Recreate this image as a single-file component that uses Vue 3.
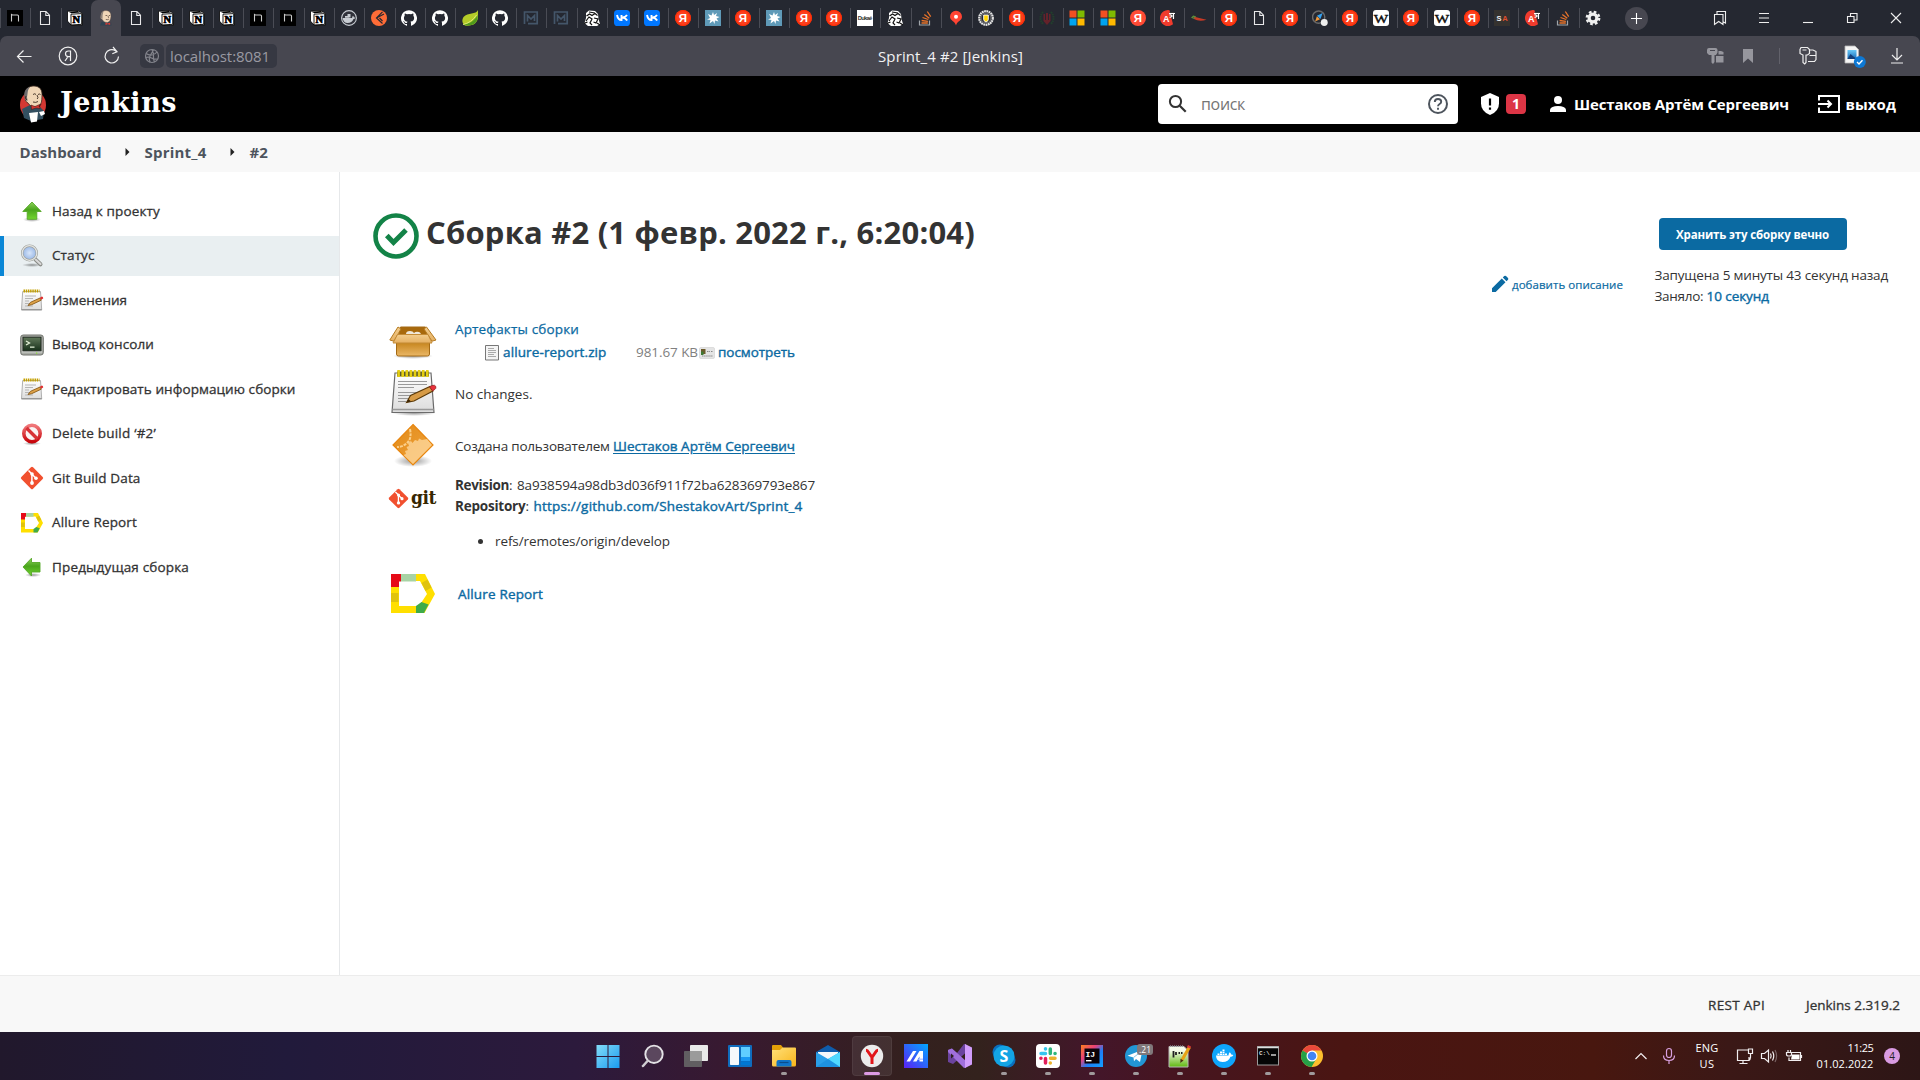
<script setup>
// Stretches a single line of text to a given advance width through letter-spacing.
const vFit = {
  mounted(el, { value }) {
    const range = document.createRange()
    range.selectNodeContents(el)
    const natural = range.getBoundingClientRect().width
    el.style.letterSpacing = (value - natural) / el.textContent.length + 'px'
  },
}

const tabs = [
  'nbox', 'doc', 'notion', 'face', 'doc', 'notion', 'notion', 'notion', 'nbox', 'nbox', 'notion',
  'dockerc', 'postman', 'github', 'github', 'leaf', 'github', 'mbox', 'mbox', 'sketch', 'vk', 'vk',
  'ya', 'splat', 'ya', 'splat', 'ya', 'ya', 'duka', 'sketch', 'stack', 'pin', 'beer', 'ya', 'crest',
  'ms', 'ms', 'ya2', 'trans', 'chili', 'ya', 'doc', 'ya', 'compass', 'ya', 'wiki', 'ya', 'wiki', 'ya',
  'sa', 'trans', 'stack', 'gear',
]

// Letters set on top of the icon shapes.
const sans = 'Liberation Sans, sans-serif'
const serif = 'Liberation Serif, serif'
const yaLetter = [{ t: 'Я', x: 8, y: 12.1, 'font-size': 11.5, 'font-weight': 700, 'font-family': sans, fill: '#fff' }]
const letters = {
  notion: [{ t: 'N', x: 9.4, y: 13, 'font-size': 10.5, 'font-weight': 700, 'font-family': serif, fill: '#000', stroke: '#000', 'stroke-width': 0.7 }],
  ya: yaLetter,
  ya2: yaLetter,
  duka: [{ t: 'Dukaé', x: 8, y: 10, 'font-size': 5.8, 'font-weight': 700, textLength: 14.5, 'font-family': sans, fill: '#333' }],
  trans: [{ t: 'A', x: 6.2, y: 11.5, 'font-size': 9, 'font-weight': 700, 'font-family': sans, fill: '#fff' }],
  wiki: [{ t: 'W', x: 8, y: 12.6, 'font-size': 13, textLength: 14.5, lengthAdjust: 'spacingAndGlyphs', 'font-family': serif, fill: '#111', stroke: '#111', 'stroke-width': 0.4 }],
  sa: [
    { t: 'S', x: 4.9, y: 10.7, 'font-size': 7.5, 'font-weight': 700, 'font-family': sans, fill: '#eee' },
    { t: 'A', x: 11, y: 10.7, 'font-size': 7.5, 'font-weight': 700, 'font-family': sans, fill: '#e2502c' },
  ],
  skype: [{ t: 'S', x: 12, y: 17.8, 'font-size': 16, 'font-weight': 700, 'font-family': 'Open Sans, sans-serif', fill: '#fff' }],
  idea: [{ t: 'IJ', x: 10.2, y: 12.5, 'font-size': 8, 'font-weight': 700, 'font-family': 'Liberation Mono, monospace', fill: '#fff' }],
  cmd: [{ t: 'C:\\', x: 8.4, y: 11, 'font-size': 6, 'font-weight': 700, 'font-family': 'Liberation Mono, monospace', fill: '#ddd' }],
}
const attrs = ({ t, ...rest }) => rest

const tasks = [
  { icon: 'up', text: 'Назад к проекту', w: 108 },
  { icon: 'lens', text: 'Статус', w: 42.5, active: true },
  { icon: 'note', text: 'Изменения', w: 75 },
  { icon: 'term', text: 'Вывод консоли', w: 102 },
  { icon: 'note', text: 'Редактировать информацию сборки', w: 243.5 },
  { icon: 'stop', text: 'Delete build ‘#2’', w: 104 },
  { icon: 'git', text: 'Git Build Data', w: 88.5 },
  { icon: 'allure', text: 'Allure Report', w: 85 },
  { icon: 'prev', text: 'Предыдущая сборка', w: 137 },
]

const apps = [
  { icon: 'win' }, { icon: 'find' }, { icon: 'views' }, { icon: 'widgets' }, { icon: 'files', run: true },
  { icon: 'mail' }, { icon: 'yab', active: true }, { icon: 'myasus' }, { icon: 'vs' },
  { icon: 'skype', run: true }, { icon: 'slack', run: true }, { icon: 'idea', run: true },
  { icon: 'tg', run: true, badge: '.21' }, { icon: 'npp', run: true }, { icon: 'docker', run: true },
  { icon: 'cmd', run: true }, { icon: 'chrome', run: true },
]
</script>

<template>
  <div class="screen">
    <svg class="defs" width="0" height="0" aria-hidden="true">
      <defs>
        <linearGradient id="gGreen" x1="0" y1="0" x2="0" y2="1"><stop offset="0" stop-color="#8ed25c" /><stop offset=".45" stop-color="#4aa51c" /><stop offset="1" stop-color="#72d62f" /></linearGradient>
        <linearGradient id="gPaper" x1="0" y1="0" x2="0" y2="1"><stop offset="0" stop-color="#fff" /><stop offset="1" stop-color="#dcdcdc" /></linearGradient>
        <linearGradient id="gRed" x1="0" y1="0" x2="0" y2="1"><stop offset="0" stop-color="#f0787a" /><stop offset="1" stop-color="#c8060c" /></linearGradient>
        <linearGradient id="gBox" x1="0" y1="0" x2="0" y2="1"><stop offset="0" stop-color="#c17d11" /><stop offset="1" stop-color="#eab767" /></linearGradient>
        <linearGradient id="gFlap" x1="0" y1="0" x2="0" y2="1"><stop offset="0" stop-color="#f3cd8e" /><stop offset="1" stop-color="#e5b062" /></linearGradient>
        <linearGradient id="gDia" x1="0" y1="0" x2="1" y2="1"><stop offset="0" stop-color="#e08a18" /><stop offset="1" stop-color="#f3a53e" /></linearGradient>
        <linearGradient id="gWin" x1="0" y1="0" x2="1" y2="1"><stop offset="0" stop-color="#83dcf8" /><stop offset="1" stop-color="#1a9bf0" /></linearGradient>
        <linearGradient id="gFold" x1="0" y1="0" x2="1" y2="1"><stop offset="0" stop-color="#ffe07a" /><stop offset="1" stop-color="#f8b51b" /></linearGradient>
        <linearGradient id="gMy" x1="1" y1="0" x2="0" y2="1"><stop offset="0" stop-color="#00a8ff" /><stop offset="1" stop-color="#5b21f5" /></linearGradient>
        <linearGradient id="gIdea" x1="0" y1="0" x2="1" y2="1"><stop offset="0" stop-color="#fc801d" /><stop offset=".35" stop-color="#e8407a" /><stop offset=".6" stop-color="#1f7df5" /><stop offset="1" stop-color="#11a0ff" /></linearGradient>
        <linearGradient id="gNpp" x1="0" y1="0" x2="0" y2="1"><stop offset=".2" stop-color="#f5fbe8" /><stop offset="1" stop-color="#5fb810" /></linearGradient>
        <linearGradient id="gTerm" x1="0" y1="0" x2="0" y2="1"><stop offset="0" stop-color="#61795a" /><stop offset="1" stop-color="#17301a" /></linearGradient>
        <linearGradient id="gSea" x1="0" y1="0" x2="0" y2="1"><stop offset="0" stop-color="#69c9f8" /><stop offset="1" stop-color="#1569b8" /></linearGradient>
        <radialGradient id="gShade"><stop offset="0" stop-color="#000" stop-opacity=".4" /><stop offset="1" stop-color="#000" stop-opacity="0" /></radialGradient>
        <radialGradient id="gLens"><stop offset="0" stop-color="#d8e6fa" /><stop offset="1" stop-color="#94b4e4" /></radialGradient>
      </defs>

      <!-- tab favicons, 16 x 16 -->
      <symbol id="nbox" viewBox="0 0 16 16"><path fill="#000" d="M0 0h16v16H0z" /><path fill="none" stroke="#c8c8c8" stroke-width="1.1" d="M4.500 11.500v-7l1 .5h5q1 0 1 1v5.500" /></symbol>
      <symbol id="doc" viewBox="0 0 16 16"><path fill="none" stroke="#e8e8ea" stroke-width="1.100" d="M3.500 1.500h5.500l3.500 3.700v9.300h-9zM8.800 1.500v4h3.700" /></symbol>
      <symbol id="notion" viewBox="0 0 16 16"><path fill="#fff" stroke="#000" stroke-width=".8" d="M.5 1.200 11 .5l4.500 3v11.500l-11 .6-4-4.500z" /><path fill="#000" d="M1.500 1.800 10.800 1l2.300 1.600-8.600.6z" /><path fill="#fff" stroke="#000" stroke-width=".9" d="M4 4.200l10.700-.6v10.700L4 15z" /></symbol>
      <symbol id="face" viewBox="0 0 16 16"><path fill="#2f4453" d="M2 15.500l1.500-3.500L8 11l5 1.500.5 3z" /><path fill="#f0d6b7" stroke="#5a4a40" stroke-width=".4" d="M3 5Q3.500.6 8 .5q5 .2 5 5.500-.3 5.500-3.500 6.500Q6 13 4.300 9.500L2.500 8z" /><path fill="#8b8078" d="M3 8Q1.800 3 5.500 1.200 4.300 4.500 4.500 9z" /><path fill="none" stroke="#4a3a30" stroke-width=".7" d="M7.500 5.500h1.800M10.800 5.500h1.400M10 6q1 1.800 0 2M7.800 9.500q1.800.5 3-.3" /><path fill="#d33833" d="M7.500 12.500l2.200 1 2.500-1v2.500l-2.500-.8-2.200.8z" /></symbol>
      <symbol id="butler" viewBox="0 0 28 38"><ellipse cx="14" cy="20" rx="13" ry="14" fill="#d33833" /><path fill="#335061" d="M3 24l8-4 10 2 4 4-1 8-12 2-7-3z" /><path fill="#f0d6b7" stroke="#3a2a20" stroke-width=".8" d="M6.500 12C5 4 10 .8 15 1c6 .2 8.500 4 8 10-.3 5 0 9-5 10.500-4 1-7-.5-9-3.500l-2.500-2z" /><path fill="#6d6b6d" d="M6 15C4 8 6 3 11 2 8 5 9 9 8 12l.5 4z" /><path fill="none" stroke="#3a2a20" stroke-width=".9" d="M14 9.500q2-1.500 3 0M19 9.500q1.500-1 2.500 0M18 10q1.800 3 .2 4M14 17q3 1 5-.5M7 11q-2 2 1 4" /><path fill="#d33833" stroke="#3a1010" stroke-width=".5" d="M12 20l4 1.500 4.500-2 .5 4-4-.5-4.500 1.500zM22 19l-2 3z" /><path fill="#fff" d="M10 28l9-1-1 9.500-6 1zM20 27l5-1 1 3-4 2z" /></symbol>
      <symbol id="dockerc" viewBox="0 0 16 16"><circle cx="8" cy="8" r="7.400" fill="#30323b" stroke="#c8cdd3" stroke-width="1.100" /><path fill="#c8cdd3" d="M1.500 8h9.500q.2-1.500 1-2.300.8.500.9 1.600 1 0 1.600.5-1 1.200-2 1.200-1.500 4-6 4-4 0-5-5zM4 6h4v1.700H4zM6.500 4h3v3.600h-3z" /></symbol>
      <symbol id="postman" viewBox="0 0 16 16"><circle cx="8" cy="8" r="8" fill="#ff6c37" /><path fill="none" stroke="#252831" stroke-width="1.200" d="M11.500 1.800 5.500 8l6 5.500M5.500 8l7.500-4M8.500 8l3 3" /></symbol>
      <symbol id="github" viewBox="0 0 16 16"><path fill="#fff" d="M8 .2a8 8 0 0 0-2.530 15.590c.4.070.55-.17.550-.38v-1.490c-2.230.48-2.700-.95-2.700-.95-.36-.92-.89-1.170-.89-1.170-.73-.5.050-.49.050-.49.810.060 1.230.83 1.230.83.720 1.230 1.880.88 2.340.67.070-.52.280-.88.510-1.080-1.780-.2-3.640-.89-3.640-3.950 0-.87.310-1.590.82-2.150-.08-.2-.36-1.020.080-2.120 0 0 .67-.22 2.200.82a7.600 7.600 0 0 1 4 0c1.530-1.040 2.200-.82 2.200-.82.440 1.100.160 1.920.080 2.120.510.560.820 1.280.820 2.150 0 3.070-1.870 3.750-3.650 3.950.290.250.540.730.540 1.480v2.190c0 .21.150.46.550.38A8 8 0 0 0 8 .2z" /></symbol>
      <symbol id="leaf" viewBox="0 0 16 16"><path fill="#b5cc28" d="M16 0C14 5 6 2 1.500 7-1 11 1 14 3 15.500c7 1 13-2 13-9z" /><path fill="#4f9a1c" d="M1 14.500C6 14 12 12 15.500 5c.8 5-2 9-6 10q-5 1.200-8.500-.5z" /><path stroke="#dfe97a" fill="none" d="M1 14.500Q9 13 14.500 5" /></symbol>
      <symbol id="mbox" viewBox="0 0 16 16"><path fill="none" stroke="#44566a" stroke-width="1.700" d="M4.500 11.500V5.500L8 9l3.500-3.500v5.500M1.500 14V2h12.700v11.700H5" /></symbol>
      <symbol id="sketch" viewBox="0 0 16 16"><path fill="#fff" d="M2 3l3-2.500 6 .5 3 3 .5 5 1.500 5-3 2H4l-3.500-3L2 8z" /><path fill="none" stroke="#111" stroke-width="1.200" d="M2.500 6l3-2 2.500 1.500 3-2 2.500 2M2 11l3-4 3 2-2 4 2 2M10 8l4 1-2 4-2.500-1M5 2l6 1M0 13.500l3.500-1.500M13 13l3 2" /></symbol>
      <symbol id="vk" viewBox="0 0 16 16"><rect width="16" height="16" rx="3.600" fill="#07f" /><path fill="none" stroke="#fff" stroke-width="1.900" d="M3 5q1 5 4.500 5V5M13 5q-1.500 2.400-4.500 2.500 3 .3 4.700 3" /></symbol>
      <symbol id="ya" viewBox="0 0 16 16"><circle cx="8" cy="8" r="8" fill="#fc3f1d" /><circle cx="8" cy="8" r="7.400" fill="none" stroke="#ff2a00" /></symbol>
      <symbol id="ya2" viewBox="0 0 16 16"><circle cx="8" cy="8" r="8" fill="#ff4a35" /></symbol>
      <symbol id="splat" viewBox="0 0 16 16"><path fill="#5f9ab8" d="M0 0h16v16H0z" /><path fill="#fff" d="M8 2l1 3 3-2-1 3 3.500 1-3 1.500 2 3-3.500-1L9.500 14 8 11l-3.500 2.500 1-3.500-3.500-.5L5 8 3 4l3.500 1.500z" /></symbol>
      <symbol id="duka" viewBox="0 0 16 16"><path fill="#fff" d="M0 0h16v16H0z" /></symbol>
      <symbol id="stack" viewBox="0 0 16 16"><path fill="none" stroke="#a0a5aa" stroke-width="1.200" d="M2.500 10.500v4.500h10v-4.500" /><path fill="none" stroke="#e8732a" stroke-width="1.300" d="M4.500 13h6.300M4.600 10.500l6.300.8M5.500 7.500l5.800 2M7.300 4.500l5 3.800M10.300 1.500l3.400 5.200" /></symbol>
      <symbol id="pin" viewBox="0 0 16 16"><path fill="#f43" d="M8 .8a6 6 0 0 0-6 6c0 4 5 4.200 6 8.700 1-4.500 6-4.700 6-8.700a6 6 0 0 0-6-6z" /><circle cx="8" cy="6.700" r="2" fill="#fff" /></symbol>
      <symbol id="beer" viewBox="0 0 16 16"><circle cx="8" cy="8" r="6.800" fill="none" stroke="#e5e5e5" stroke-width="2.200" stroke-dasharray="1.800 .5" /><circle cx="8" cy="8" r="5" fill="#252831" stroke="#999" stroke-width=".7" /><path fill="#ffd400" stroke="#fff" stroke-width=".9" d="M5.700 5h4.600v4.500Q10 11.500 8 12 6 11.500 5.700 9.500z" /></symbol>
      <symbol id="crest" viewBox="0 0 16 16"><path fill="none" stroke="#22402c" stroke-width="2" stroke-dasharray="1.500 .8" d="M4 2Q-1 8 4 14M12 2q5 6 0 12" /><path fill="#64222a" d="M4.500 4h1.500v6h1V3h2v7h1V4h1.500v7L8 15l-3.500-4z" /></symbol>
      <symbol id="ms" viewBox="0 0 16 16"><path fill="#f25022" d="M.5.500h7v7h-7z" /><path fill="#7fba00" d="M8.500.500h7v7h-7z" /><path fill="#00a4ef" d="M.5 8.500h7v7h-7z" /><path fill="#ffb900" d="M8.500 8.500h7v7h-7z" /></symbol>
      <symbol id="trans" viewBox="0 0 16 16"><path fill="#f03b2d" d="M9.500.2A8 8 0 1 0 13 14.300z" /><path fill="#3a3a3a" d="M9.500 2h5v6.500h-3z" /><path fill="none" stroke="#fff" stroke-width="1.100" d="M9 3.500h6M13.500 3.500V9M9.500 5q2-.5 2 1t-2 1.200M11.500 6h2" /></symbol>
      <symbol id="chili" viewBox="0 0 16 16"><path fill="#c73a26" d="M2.500 6.500q5 1.500 13 3.300-7.500 2.200-12.500-.8z" /><path stroke="#5a8f3a" fill="none" stroke-width="1.200" d="M3.500 8.500 1 7.500l1.300-1.300 2.500.6" /></symbol>
      <symbol id="compass" viewBox="0 0 18 18"><circle cx="7.500" cy="8" r="6.900" fill="none" stroke="#6a6a6a" stroke-width="1.600" /><path fill="#35a2f0" d="M12 3.500 9.500 10 5.500 6.500z" /><path fill="#f29a3a" d="M3.500 13l2-6 3.500 3.500z" /><circle cx="13.800" cy="14" r="3.900" fill="#eee" /></symbol>
      <symbol id="wiki" viewBox="0 0 16 16"><rect width="16" height="16" rx="3" fill="#fff" /></symbol>
      <symbol id="sa" viewBox="0 0 16 16"><path fill="#35322f" d="M0 0h16v16H0z" /></symbol>
      <symbol id="gear" viewBox="0 0 16 16"><circle cx="8" cy="8" r="3.900" fill="none" stroke="#f0f0f0" stroke-width="3.200" /><circle cx="8" cy="8" r="6.200" fill="none" stroke="#f0f0f0" stroke-width="2.400" stroke-dasharray="2.650 2.220" /></symbol>

      <!-- build icons, 24 x 24 -->
      <symbol id="up" viewBox="0 0 24 24"><ellipse cx="12" cy="20.500" rx="9" ry="2.500" fill="url(#gShade)" /><path fill="url(#gGreen)" stroke="#56a828" stroke-width=".9" d="M12 3 2.800 12.500h4.400v7.800h9.600v-7.800h4.400z" /></symbol>
      <symbol id="prev" viewBox="0 0 24 24"><ellipse cx="13" cy="20" rx="8" ry="2" fill="url(#gShade)" /><path fill="url(#gGreen)" stroke="#56a828" stroke-width=".9" d="M3 12l8.500-8.800v4.300h8.500v9.500h-8.500v4z" /></symbol>
      <symbol id="lens" viewBox="0 0 24 24"><ellipse cx="12" cy="21" rx="10" ry="2" fill="url(#gShade)" /><path stroke="#888a85" stroke-width="4" stroke-linecap="round" d="M15.500 15.500l5 4.800" /><path stroke="#d8d8d8" stroke-width="2.200" stroke-linecap="round" d="M14 14l6.500 6" /><circle cx="9.500" cy="9" r="7.300" fill="url(#gLens)" stroke="#9c9f99" stroke-width="2.400" /><circle cx="9.500" cy="9" r="7.300" fill="none" stroke="#e6e7e5" stroke-width="1.200" /></symbol>
      <symbol id="note" viewBox="0 0 24 24"><path fill="url(#gPaper)" stroke="#b0b0b0" d="M2.700 3.500h17.800l1.200 18.300H1.500z" /><path stroke="#888" stroke-width="1" d="M1.500 21.800h20.300" /><path stroke="#c4a000" stroke-width="3" stroke-dasharray="1.500 .7" d="M3.500 3h16" /><path stroke="#b5b5b5" d="M5 8h11M5 10.500h8M5 13h4M5 15.500h4M5 18h8" /><path fill="#ddA24a" stroke="#80500c" stroke-width=".8" d="M8 17.500l2.500-3.200 9.500-4.300 1.200 2.200-9.500 4.500z" /><path fill="#e03030" d="M19.800 9.800l2-1.200q1.500 0 1.400 2l-2 1.200z" /></symbol>
      <symbol id="term" viewBox="0 0 24 24"><rect x=".7" y="2" width="22.600" height="20" rx="2.500" fill="#a9aca6" stroke="#70736d" /><path stroke="#dcdedb" stroke-width="1.200" d="M2 18.800h20" /><rect x="3" y="4.200" width="18" height="13.600" fill="url(#gTerm)" stroke="#222b22" /><path stroke="#e4f2d8" fill="none" stroke-width="1.300" d="M6 8l3.500 2L6 12M10 14.200h4.500" /><path fill="#8ae234" d="M16 19.500h1.300v1.300H16z" /></symbol>
      <symbol id="stop" viewBox="0 0 24 24"><ellipse cx="12" cy="21.500" rx="9" ry="1.800" fill="url(#gShade)" /><circle cx="12" cy="11.500" r="8.200" fill="#fbf3f3" stroke="url(#gRed)" stroke-width="3.600" /><path stroke="#d83237" stroke-width="3.400" d="M6.500 6l11 11" /></symbol>
      <symbol id="git" viewBox="0 0 24 24"><rect x="3.700" y="3.700" width="16.600" height="16.600" rx="1.500" fill="#f1502f" transform="rotate(45 12 12)" /><path stroke="#fff" stroke-width="1.500" fill="none" d="M8.500 4.500l3.400 3.500v8.500M12 8.200l4 4" /><circle cx="12" cy="8" r="1.800" fill="#fff" /><circle cx="12" cy="17" r="1.900" fill="#fff" /><circle cx="16" cy="12.200" r="1.800" fill="#fff" /></symbol>
      <symbol id="allure" viewBox="0 0 44 40"><path fill="#ffdf00" d="M0 0h34l10 20-10.500 19H0zM8 7v25h20l8-12-7-13z" fill-rule="evenodd" /><path fill="#e60a17" d="M0 0h10v7.500H8V13H0z" /><path fill="#a8d3a4" d="M10 0h15v7.500H10z" /><path fill="#e0c30d" d="M0 19h7.500v9H0zM30.500 9l6-3.500 4 8-6 3.500z" /><path fill="#3fab49" d="M25 32l5.500-4 7 2.500L33 39h-8z" /></symbol>

      <!-- taskbar, 24 x 24 -->
      <symbol id="win" viewBox="0 0 24 24"><path fill="url(#gWin)" d="M.5 1h11v11H.5zM12.500 1h11v11h-11zM.5 13h11v11H.5zM12.500 13h11v11h-11z" /></symbol>
      <symbol id="find" viewBox="0 0 24 24"><circle cx="14" cy="10.300" r="8.700" fill="#fff" fill-opacity=".2" stroke="#e4e2e6" stroke-width="1.900" /><path stroke="#d0ced2" stroke-width="2.500" stroke-linecap="round" d="M7.500 17 3 22" /></symbol>
      <symbol id="views" viewBox="0 0 24 24"><rect x="6" y="1" width="18" height="16" rx=".8" fill="#e9e9e9" /><rect x="0" y="7" width="18" height="16" rx=".8" fill="#666" fill-opacity=".9" /><path fill="#9b9b9b" d="M6 7h12v10H6z" /></symbol>
      <symbol id="widgets" viewBox="0 0 24 24"><rect y="1" width="24" height="22" rx="1" fill="#0f6cbd" /><rect x="2" y="3" width="9" height="18" rx=".7" fill="#f4f8fb" /><path fill="#60cdff" d="M13 3h9v10h-9z" /><path fill="#1897f2" d="M13 13h9v4h-9z" /><path fill="#0078d4" d="M13 17.500h9V21h-9z" /></symbol>
      <symbol id="files" viewBox="0 0 24 24"><path fill="#e3a008" d="M0 2q0-1 1-1h8l2 2.500L9 6H0z" /><path fill="url(#gFold)" d="M0 6h8l2.500-2.500H23q1 0 1 1V21q0 1.500-1.500 1.500h-21Q0 22.500 0 21z" /><path fill="#0f74c9" d="M4.500 22.500V18q0-2 2-2h11q2 0 2 2v4.500z" /><path stroke="#0a4d8c" stroke-width="1.200" d="M7.500 18.500h9" /></symbol>
      <symbol id="mail" viewBox="0 0 24 24"><path fill="#0f5cab" d="M0 8l12-7 12 7v4H0z" /><path fill="#f4f8fb" d="M2 8h20v3l-10 7L2 11z" /><path fill="#2a9fe8" d="M0 8l12 7 12-7v15H0z" /><path fill="#50d9ff" d="M24 8v15L12 15z" /><path fill="#1285d8" opacity=".5" d="M0 23l12-8 12 8z" /></symbol>
      <symbol id="yab" viewBox="0 0 24 24"><circle cx="12" cy="12" r="11.200" fill="#ececec" /><path fill="none" stroke="#e2161a" stroke-width="3" d="M6 6.300q1.500 0 2.500 2l3.500 5 3.500-5q1-2 2.500-2M12 12.500V20" /></symbol>
      <symbol id="myasus" viewBox="0 0 24 24"><path fill="url(#gMy)" d="M0 0h24v24H0z" /><path fill="#fff" d="M2.500 17.500 9 7h3.500L6 17.500zM9 17.500 15.500 7H19v10.500h-3.500v-5l-3 5z" /><path fill="#b9c8ff" d="M15 14.500h4v1.500h-5z" /></symbol>
      <symbol id="vs" viewBox="0 0 24 24"><path fill="#6b439e" d="M0 6l3.500-1.500L9 9l7-9 2 .5v8L5 20 0 18z" /><path fill="#a06fdc" d="M0 6l4-1.500L18 17v6.500L16 24 0 8z" /><path fill="#d19dfb" d="M17 0l7 3.500v17L17 24z" /><path fill="#2e2022" d="M3 9.500v5L6 12z" /></symbol>
      <symbol id="skype" viewBox="0 0 24 24"><circle cx="8" cy="8" r="7.500" fill="#0a6fbe" /><circle cx="16" cy="16" r="7.500" fill="#0a6fbe" /><circle cx="12" cy="12" r="10.500" fill="#13a4e4" /></symbol>
      <symbol id="slack" viewBox="0 0 24 24"><rect width="24" height="24" rx="4" fill="#fff" /><g stroke-width="3.500" stroke-linecap="round"><path stroke="#36c5f0" d="M5 9.500h4.500M9.500 4.800v.1" /><path stroke="#2eb67d" d="M14.300 5v4.500M19 9.500h.1" /><path stroke="#ecb22e" d="M14.500 14.300H19M14.300 19v.1" /><path stroke="#e01e5a" d="M9.500 14.500V19M4.900 14.300H5" /></g></symbol>
      <symbol id="idea" viewBox="0 0 24 24"><path fill="url(#gIdea)" d="M1 1h22v22H1z" /><path fill="#0a0208" d="M4.500 4.500h15v15h-15z" /><path fill="#fff" d="M6 16h5.500v1.400H6z" /></symbol>
      <symbol id="tg" viewBox="0 0 24 24"><circle cx="12" cy="12" r="11" fill="#2296d4" /><path fill="#fff" d="M3.500 11.800 18.500 5.800 16 18l-4-3-2 2.300-.5-3.800z" /><path stroke="#8bc7e6" d="M9.500 13.500 16 8.500" /></symbol>
      <symbol id="npp" viewBox="0 0 24 24"><path fill="url(#gNpp)" stroke="#b8b8b8" d="M1 2.500h15l4 4V23H1z" /><path stroke="#888" stroke-width="1.500" stroke-dasharray="1 1" d="M2 2h13" /><path stroke="#222" stroke-width="1.800" fill="none" d="M5.500 7v6.500M8 8v3M10.500 9h1.500M13 9h1.500" /><path stroke="#e8a316" stroke-width="3.200" d="M21.500 3 14 16" /><path fill="#d33" d="M20 1l3 1.500-1 2-3-1.500z" /><path fill="#4a3210" d="M12.500 14.800l3 1.700L12.300 19z" /></symbol>
      <symbol id="docker" viewBox="0 0 24 24"><circle cx="12" cy="12" r="12" fill="#0ea5fb" /><path fill="#fff" d="M4 11.500h12.500q0-2 1.200-3.200 1.300.8 1.400 2.300 1.500-.2 2.200.6-1 1.500-2.800 1.500-2 5.300-8 5.300-6.300 0-6.500-6.500zM5.500 9.500h2v1.500h-2zM8 9.500h2v1.500H8zM10.500 9.500h2v1.500h-2zM13 9.500h2v1.500h-2zM8 7.500h2V9H8zM10.500 7.500h2V9h-2zM10.500 5.500h2V7h-2z" /></symbol>
      <symbol id="cmd" viewBox="0 0 24 24"><rect x="1.500" y="2.500" width="21" height="18.500" fill="#050505" stroke="#9b9b9b" /><path stroke="#ddd" stroke-width="1.500" d="M1.500 3.500h21" /><path stroke="#fff" stroke-width="1.200" d="M15 11h5" /></symbol>
      <symbol id="chrome" viewBox="0 0 24 24"><circle cx="12" cy="12" r="11" fill="#fdbf2d" /><path fill="#e8483b" d="M12 12 2.500 6.500a11 11 0 0 1 19 0H12z" /><path fill="#26a148" d="M2.500 6.500A11 11 0 0 0 11.500 23l5-8.500L12 12z" /><circle cx="12" cy="12" r="5.500" fill="#fff" /><circle cx="12" cy="12" r="4.300" fill="#4285f4" /></symbol>
    </svg>

    <header class="tabbar">
      <div class="tabs">
        <div v-for="(t, i) in tabs" :key="i" class="tab" :class="{ current: i === 3, after: i === 4 }">
          <svg width="16" height="16"><use :href="'#' + t" /><text v-for="l in letters[t] || []" :key="l.x" text-anchor="middle" v-bind="attrs(l)">{{ l.t }}</text></svg>
        </div>
      </div>
      <div class="newtab"><svg width="23" height="23" viewBox="0 0 23 23"><circle cx="11.500" cy="11.500" r="11.500" fill="#474750" /><path stroke="#fff" stroke-width="1.100" d="M11.500 6v11M6 11.500h11" /></svg></div>
      <div class="winbtns">
        <svg viewBox="0 0 16 16"><path d="M5 4V1.500h8.500V13l-3-1.500M2.500 4.500h8.500v10L6.700 11.500 2.500 14.500z" /></svg>
        <svg viewBox="0 0 16 16"><path d="M3 3.500h10M3 8h10M3 12.500h10" /></svg>
        <svg viewBox="0 0 16 16"><path d="M3 12.500h10" /></svg>
        <svg viewBox="0 0 16 16"><path d="M3.500 6.500h6.500v6H3.500zM6.500 6.500v-3H13v6.500h-3" /></svg>
        <svg viewBox="0 0 16 16"><path d="M3 3l10 10M13 3 3 13" /></svg>
      </div>
    </header>

    <div class="addr">
      <svg class="nav" width="18" height="18" viewBox="0 0 18 18"><path d="M16.500 9.500H2.500M8.500 3.500l-6 6 6 6" /></svg>
      <svg class="nav" width="20" height="20" viewBox="0 0 20 20"><circle cx="10" cy="10" r="8.800" /><path d="M12.500 15V5h-2q-3 0-3 2.800t3 2.800h2M10 10.600 7 15" /></svg>
      <svg class="nav" width="18" height="20" viewBox="0 0 18 20"><path d="M15.500 10.500a6.700 6.700 0 1 1-3-5.800l1.500 1M10 1l4 4.700-4.700 2" /></svg>
      <div class="globe"><svg width="16" height="16" viewBox="0 0 16 16"><circle cx="8" cy="8" r="6.500" /><path d="M2 5.500q3 2 6 1.500t5-3M1.500 9.500q3.500-1 6 .5t5.500 1M6 14.300q-1.500-3.500 0-6.300t3.500-6M10.500 14Q9 10.500 9.500 8T8 2" /></svg></div>
      <div class="url"><span v-fit="100">localhost:8081</span></div>
      <div class="pagetitle"><span v-fit="145">Sprint_4 #2 [Jenkins]</span></div>
      <div class="addr-r">
        <svg width="18" height="18" viewBox="0 0 18 18"><path fill="#96969d" d="M1 3q0-2 2-2h6.500q2 0 2 2v2.500L10 8H8.500v7L7 17l-1.500-1.500V8H3L1 6z" /><path fill="#96969d" d="M12.500 4H15l2.500 1v2.500h-5zM10 9h7.500v6.500H10z" /><path stroke="#474750" d="M4 3.500h5" /></svg>
        <svg width="12" height="14" viewBox="0 0 12 14"><path fill="#96969d" d="M1 0h10v14l-5-4.500L1 14z" /></svg>
        <i />
        <svg width="20" height="20" viewBox="0 0 20 20"><path fill="none" stroke="#eee" stroke-width="1.200" d="M3 1.500h6.500l2 2v4l-2 1.500H8v7.500L6.700 18 5 16.500V9L2 7.500v-4zM4.500 4h4M11.500 4H15l3 1.500v8l-1.500 2H10M11.500 9.500H18" /></svg>
        <svg width="22" height="24" viewBox="0 0 22 24"><path fill="#f5f5f5" stroke="#b5b5b5" stroke-width=".8" d="M1 1h10l3.500 3.500V18H1z" /><path fill="url(#gSea)" d="M3.500 5h9v9h-9z" /><path fill="#15407a" d="M3.500 14l3-5 6 5z" /><circle cx="15.800" cy="17" r="6" fill="#0d78d4" /><path fill="none" stroke="#fff" stroke-width="1.400" d="M13 17l2 2 3.500-3.800" /></svg>
        <svg width="14" height="18" viewBox="0 0 14 18"><path fill="none" stroke="#eee" stroke-width="1.200" d="M7 1v12M2 8l5 5 5-5M1 16h12" /></svg>
      </div>
    </div>

    <div class="jhead">
      <svg class="jlogo" width="28" height="38"><use href="#butler" /></svg>
      <span v-fit="117" class="jname">Jenkins</span>
      <div class="search">
        <svg width="20" height="20" viewBox="0 0 20 20"><circle cx="7.500" cy="7.500" r="5.600" fill="none" stroke="#333" stroke-width="2" /><path stroke="#333" stroke-width="2.200" d="M11.700 11.700l6 6" /></svg>
        <span v-fit="44">поиск</span>
        <svg width="22" height="22" viewBox="0 0 22 22"><circle cx="11" cy="11" r="9" fill="none" stroke="#4d545d" stroke-width="2" /><path fill="none" stroke="#4d545d" stroke-width="1.900" d="M7.800 9q0-3 3.200-3t3.200 2.800q0 1.300-1.600 2.200Q11 12 11 13.300M11 14.700v2" /></svg>
      </div>
      <svg class="shield" width="20" height="24" viewBox="0 0 20 24"><path fill="#fff" d="M10 1l9 4v6.500q0 8-9 11.500-9-3.500-9-11.500V5z" /><path stroke="#000" stroke-width="2.200" d="M10 6.500v7M10 15.500v2.200" /></svg>
      <b class="alert">1</b>
      <svg class="user" width="16" height="16" viewBox="0 0 16 16"><circle cx="8" cy="4" r="4" fill="#fff" /><path fill="#fff" d="M0 16v-2.500Q1 10 8 10t8 3.500V16z" /></svg>
      <b v-fit="215" class="uname">Шестаков Артём Сергеевич</b>
      <svg class="exit" width="22" height="18" viewBox="0 0 22 18"><path fill="none" stroke="#fff" stroke-width="2" d="M1 5.500V1h20v16H1v-4.500M0 9h13M9.500 5.500 13 9l-3.500 3.500" /></svg>
      <b v-fit="50.5">выход</b>
    </div>

    <nav class="crumbs">
      <b v-fit="82">Dashboard</b>
      <svg width="5" height="8" viewBox="0 0 5 8"><path fill="#222" d="M.5 0 4.500 4 .5 8z" /></svg>
      <b v-fit="62">Sprint_4</b>
      <svg width="5" height="8" viewBox="0 0 5 8"><path fill="#222" d="M.5 0 4.500 4 .5 8z" /></svg>
      <b v-fit="18.5">#2</b>
    </nav>

    <div class="body">
      <aside class="side">
        <div v-for="t in tasks" :key="t.text" class="task" :class="{ active: t.active }">
          <svg v-if="t.icon === 'allure'" class="mini" width="22" height="20"><use href="#allure" /></svg>
          <svg v-else width="24" height="24"><use :href="'#' + t.icon" /></svg>
          <span v-fit="t.w">{{ t.text }}</span>
        </div>
      </aside>

      <main class="main">
        <section class="top">
          <div class="head">
            <svg width="46" height="46" viewBox="0 0 46 46"><circle cx="23" cy="23" r="20.500" fill="#fff" stroke="#138347" stroke-width="4.600" /><path fill="none" stroke="#138347" stroke-width="5" d="M13.800 22.500l6.700 7L33 17" /></svg>
            <h1><span v-fit="549">Сборка #2 (1 февр. 2022 г., 6:20:04)</span></h1>
          </div>
          <div class="describe">
            <svg width="18" height="18" viewBox="0 0 18 18"><path fill="#0b6aa2" d="M1 17v-3.700L10.800 3.500l3.700 3.700L4.700 17zM11.800 2.500 13.200 1q1-.7 1.800 0l2 2q.7.900 0 1.800l-1.500 1.400z" /></svg>
            <span v-fit="111">добавить описание</span>
          </div>
          <div class="info">
            <div class="keep"><span v-fit="153">Хранить эту сборку вечно</span></div>
            <p><span v-fit="233.5">Запущена 5 минуты 43 секунд назад</span></p>
            <p><span v-fit="52">Заняло: </span><span v-fit="62.5" class="link">10 секунд</span></p>
          </div>
        </section>

        <section class="row r1">
          <div class="ico">
            <svg width="48" height="34" viewBox="0 0 48 34"><ellipse cx="24" cy="31" rx="20" ry="3" fill="url(#gShade)" /><path fill="#a8690c" stroke="#a46a14" d="M11.500 2h25l2.500 14H9z" /><path fill="#efe7d8" d="M17 9q0-3 4-3 3 0 4 2 2-2 5-1 3 1 1 4H17z" /><path fill="url(#gFlap)" stroke="#b57a20" d="M9 2 .8 15l4 1.200L12 4zM37.500 2 47 15l-4 1.200L35 4z" /><path fill="url(#gBox)" stroke="#a46a14" d="M7.500 15.500h33v13.500q0 2-2 2h-29q-2 0-2-2z" /><path fill="url(#gFlap)" stroke="#c48b36" d="M8.500 9.500h30.500l4 8.500H4z" /></svg>
          </div>
          <div class="lines">
            <div class="art"><span v-fit="124" class="link">Артефакты сборки</span></div>
            <div class="file">
              <svg width="14" height="16" viewBox="0 0 14 16"><path fill="#f4f4f4" stroke="#777" d="M.5.500h13v14.500H.5z" /><path stroke="#aaa" d="M3 3.500h6M3 5.500h8M3 7.500h8M3 9.500h6M3 11.500h8" /></svg>
              <span v-fit="103.5" class="link zip">allure-report.zip</span>
              <span v-fit="62" class="size">981.67 KB</span>
              <svg width="16" height="12" viewBox="0 0 16 12"><rect x=".5" y=".5" width="15" height="11" rx="1.500" fill="#e4e4e4" stroke="#ddd" /><path fill="#6b5a2a" d="M2 2h4.500v5H2z" /><path fill="#3d7a34" d="M2 4.500h2.500V8H2z" /><path stroke="#888" d="M8 4.500h3M12 4.500h2M3 9h11" stroke-dasharray="1.500 .6" /></svg>
              <span v-fit="77" class="link">посмотреть</span>
            </div>
          </div>
        </section>
        <section class="row r2">
          <div class="ico">
            <svg width="48" height="48" viewBox="0 0 48 48"><ellipse cx="24" cy="44" rx="22" ry="3" fill="url(#gShade)" /><path fill="url(#gPaper)" stroke="#6b6b6b" stroke-width="1.200" d="M5 4h36l3 39.500H2z" /><path stroke="#999" stroke-width="1.300" d="M2.500 40.500h41" /><path stroke="#5a5a2a" stroke-width="5" d="M7 5h32" /><path stroke="#e5ce10" stroke-width="7" stroke-dasharray="2.600 1.500" d="M7.300 4.500h32" /><path stroke="#999" d="M8 12.500h29M8 15.500h29M8 18.500h16M8 23.500h26M8 26.500h18M8 29.500h13M8 32.500h8" /><path fill="#d79b46" stroke="#5c3a08" stroke-width="1.100" d="M16.500 33.500l4-7L40 17.500l3 4.500-19 10z" /><path fill="#3c2606" d="M16.500 33.500l2-3.500 2.500 2.500z" /><path fill="#e8323c" stroke="#8a1a1a" stroke-width=".7" d="M39.500 17.800l2.500-1.300q3-1 3.800 1 .7 2-1.300 3.200l-2 1.300z" /></svg>
          </div>
          <span v-fit="77.5">No changes.</span>
        </section>
        <section class="row r3">
          <div class="ico">
            <svg width="44" height="46" viewBox="0 0 44 46"><ellipse cx="22" cy="38" rx="19" ry="6" fill="url(#gShade)" /><path fill="url(#gDia)" stroke="#e8860f" stroke-width="1.200" d="M22 1.500 42 22 22 42 2 22z" /><path fill="#fdd9a0" d="M17 20l3-2 1.500 2 2.500-3 3 1 1-2.500 3 1.500L36 16l5 6-19 19-9.500-9 2.500-1-1-3 3-1-1.500-3 2.500-1z" opacity=".75" /><path fill="none" stroke="#fbd08c" stroke-width="2" d="M19 6q2 10-3 14-4 4-10 4" stroke-dasharray="3 1" /></svg>
          </div>
          <span v-fit="158">Создана пользователем </span><span v-fit="182" class="link under">Шестаков Артём Сергеевич</span>
        </section>
        <section class="row r4">
          <div class="ico gitlogo"><svg width="21" height="21"><use href="#git" /></svg><span v-fit="25">git</span></div>
          <div class="lines">
            <p><span v-fit="54" class="bold">Revision</span><span class="colon">:</span><span v-fit="298">8a938594a98db3d036f911f72ba628369793e867</span></p>
            <p><span v-fit="70.5" class="bold">Repository</span><span class="colon">:</span><span v-fit="269" class="link">https://github.com/ShestakovArt/Sprint_4</span></p>
            <div class="ref"><i /><span v-fit="175">refs/remotes/origin/develop</span></div>
          </div>
        </section>
        <section class="row r5">
          <div class="ico"><svg width="44" height="40"><use href="#allure" /></svg></div>
          <span v-fit="85" class="link">Allure Report</span>
        </section>
      </main>
    </div>

    <footer class="foot">
      <span v-fit="57">REST API</span>
      <span v-fit="94">Jenkins 2.319.2</span>
    </footer>

    <div class="taskbar">
      <div class="apps">
        <div v-for="a in apps" :key="a.icon" class="app" :class="{ on: a.active, run: a.run }">
          <svg width="24" height="24"><use :href="'#' + a.icon" /><text v-for="l in letters[a.icon] || []" :key="l.x" text-anchor="middle" v-bind="attrs(l)">{{ l.t }}</text></svg>
          <span v-if="a.badge" class="cnt">{{ a.badge }}</span>
        </div>
      </div>
      <div class="tray">
        <svg class="chev" width="14" height="14" viewBox="0 0 14 14"><path d="M1.500 10 7 4.500 12.500 10" /></svg>
        <svg class="mic" width="14" height="18" viewBox="0 0 14 18"><rect x="4.500" y="1.500" width="5" height="9" rx="2.500" /><path d="M1.500 8.500q0 5 5.500 5t5.500-5M7 13.500V17" /></svg>
        <div class="lang"><span v-fit="23">ENG</span><span v-fit="15">US</span></div>
        <svg class="net" width="18" height="18" viewBox="0 0 18 18"><path d="M12 3H1.500v10.500H13V10M7 13.500v3M3.500 16.500h8M12.500 2h4v4.500h-4zM14.500 6.500v4q0 2-2 3" /></svg>
        <svg class="vol" width="18" height="16" viewBox="0 0 18 16"><path d="M1.500 5.500h3l4-3.500v12l-4-3.500h-3zM10.500 5.500q1.300 2.500 0 5M12.500 3.500q2.500 4.500 0 9" /><path d="M15 2q3.200 6 0 12" opacity=".35" /></svg>
        <svg class="bat" width="18" height="16" viewBox="0 0 18 16"><path d="M5 4.500h10.500v8H4v-3M16.500 7v3M3 5v-3M5.500 5V2M1.500 4.500h5v2Q6.500 8 4 8T1.500 6.500z" /><path fill="#fff" stroke="none" d="M7 6.500h7.500v5H6z" /></svg>
        <div class="clock"><span v-fit="26">11:25</span><span v-fit="57">01.02.2022</span></div>
        <b class="ntf">4</b>
      </div>
    </div>
  </div>
</template>

<style>
body { margin: 0; background: #fff; overflow: hidden; }
</style>

<style scoped>
.screen { width: 1920px; height: 1080px; display: flex; flex-direction: column; overflow: hidden; font: 14px/21px "Open Sans", "Noto Sans", sans-serif; color: #333; background: #fff; white-space: nowrap; }
.defs { position: absolute; }
svg { display: block; flex: none; overflow: visible; }
p, h1 { margin: 0; }
span { display: inline-block; white-space: pre; }
b { font-weight: 700; }

.tabbar { height: 36px; flex: none; display: flex; align-items: center; background: #252831; }
.tabs { display: flex; width: 1609px; height: 36px; }
.tab { flex: 1; display: flex; align-items: center; justify-content: center; background: linear-gradient(#4a4c55, #4a4c55) 0 8px / 1px 20px no-repeat; }
.tab svg { margin-left: -1px; }
.tab.current { background: #474750; border-radius: 7px 7px 0 0; }
.tab.after { background: none; }
.newtab { margin-left: 16px; }
.winbtns { margin-left: 63.500px; display: flex; gap: 28px; }
.winbtns svg { width: 16px; height: 16px; fill: none; stroke: #eee; stroke-width: 1.100; }

.addr { height: 40px; flex: none; display: flex; align-items: center; background: #474750; border-radius: 7px 7px 0 0; padding-left: 15px; box-sizing: border-box; }
.screen { background: linear-gradient(#252831, #252831) 0 0 / 100% 60px no-repeat #fff; }
.nav { fill: none; stroke: #f0f0f0; stroke-width: 1.200; margin-right: 25px; }
.nav + .nav { margin-right: 25px; }
.nav + .nav + .nav { margin-right: 19px; }
.globe { width: 24px; height: 24px; border-radius: 5px; background: #363842; display: grid; place-items: center; }
.globe svg { fill: none; stroke: #83848c; stroke-width: 1.200; }
.url { width: 107px; height: 24px; margin-left: 2px; padding-left: 4px; border-radius: 5px; background: #363842; color: #9a9aa2; font-size: 15px; line-height: 24px; }
.pagetitle { flex: 1; padding-left: 601px; color: #f2f2f3; font-size: 15px; }
.addr-r { width: 214px; display: flex; align-items: center; }
.addr-r svg:nth-child(2) { margin-left: 18px; }
.addr-r i { width: 1px; height: 16px; background: #62626b; margin: 0 18px 0 25px; }
.addr-r svg:nth-child(5) { margin: 2px 0 0 26px; }
.addr-r svg:nth-child(6) { margin-left: 24px; }

.jhead { height: 56px; flex: none; display: flex; align-items: center; background: #000; color: #fff; font-size: 15px; box-sizing: border-box; padding-left: 19px; }
.jname { margin: -3px 0 0 13px; width: 116px; font: bold 27px/36px "DejaVu Serif", serif; }
.search { margin-left: 982px; width: 300px; height: 40px; box-sizing: border-box; padding: 0 9px 0 10px; display: flex; align-items: center; background: #fff; border-radius: 4px; color: #757575; font-size: 16px; }
.search span { margin: 0 auto 0 13px; }
.shield { margin-left: 22px; }
.alert { width: 20px; height: 20px; margin-left: 6px; border-radius: 4px; background: #dc3545; text-align: center; font-size: 14px; line-height: 20px; }
.user { margin-left: 24px; }
.uname { margin: 0 0 0 8px; width: 215px; }
.exit { margin: 0 5.500px 0 29px; }

.crumbs { height: 40px; flex: none; display: flex; align-items: center; padding-left: 19.500px; background: #f8f8f8; color: #4d545d; font-size: 15px; }
.crumbs b + svg { margin: 0 15px 0 23px; }

.body { flex: 1; display: flex; min-height: 0; background: #fff; }
.side { width: 339px; border-right: 1px solid #e6e8ea; padding-top: 19px; }
.task { height: 40px; margin-bottom: 4.500px; display: flex; align-items: center; gap: 8px; padding-left: 20px; color: #333; }
.task.active { background: #e9eff1; box-shadow: inset 4px 0 #0b87d6; }
.mini { margin: 0 1px; }
.task span, .foot span { font-size: 13.500px; -webkit-text-stroke: .3px; }

.main { flex: 1; padding-left: 33px; }
.top { height: 146px; display: flex; align-items: flex-start; }
.head { display: flex; gap: 7px; margin-top: 41px; width: 1118px; }
h1 { font-size: 31px; font-weight: 700; line-height: 40px; margin-top: -1px; }
.describe { display: flex; align-items: center; gap: 3px; margin-top: 102px; width: 163.500px; color: #0b6aa2; font-size: 11.500px; }
.describe span { -webkit-text-stroke: .2px; }
.describe svg { margin-top: -1px; }
.info { padding-top: 46px; }
.keep { width: 188px; height: 32px; margin: 0 0 15px 4px; border-radius: 4px; background: #0b6aa2; color: #fff; text-align: center; line-height: 33px; font-size: 11.500px; font-weight: 700; }
.info p, .lines p { height: 21px; line-height: 21px; }
.link { color: #0b6aa2; -webkit-text-stroke: .4px; }
.row { display: flex; align-items: center; }
.ico { width: 48px; margin: 0 18px 0 16px; display: flex; justify-content: center; }
.row, .info p { font-size: 13.500px; }
.bold { font-weight: 700; }

.r1 { height: 50px; align-items: flex-start; }
.r1 .ico { margin-top: 7px; }
.art { height: 21px; margin-top: 1px; }
.art .link { -webkit-text-stroke: .25px; }
.file { display: flex; align-items: center; height: 24px; margin-left: 30px; }
.file svg:first-child { margin: 2px 4px 0 0; }
.size { color: #808080; margin: 0 4px 0 30px; }
.file svg:nth-child(4) { margin: 2px 3px 0 -3px; }
.zip { width: 103px; }
.r2 { height: 52px; }
.r2 svg { margin: -2px 0 0 2px; }
.r3 { height: 52px; }
.under { text-decoration: underline; text-underline-offset: 2px; }
.r4 { height: 88px; align-items: flex-start; padding-top: 2px; box-sizing: border-box; }
.gitlogo { align-items: center; margin-top: 14px; gap: 2px; justify-content: flex-start; }
.gitlogo span { font: bold 19px/21px "DejaVu Serif Condensed", "DejaVu Serif", serif; color: #362701; margin-top: -3px; }
.gitlogo svg { margin-left: -1px; }
.colon { width: 8px; }
.r4 .lines { padding-top: 1px; }
.ref { display: flex; align-items: center; margin: 14px 0 0 23px; }
.ref i { width: 5px; height: 5px; border-radius: 50%; background: #333; margin-right: 12px; }
.r5 { height: 56px; margin-top: 6px; }
.r5 .link { margin-left: 3px; }

.foot { height: 57px; flex: none; box-sizing: border-box; border-top: 1px solid #ececec; background: #f8f8f8; display: flex; align-items: center; justify-content: flex-end; gap: 41px; padding: 2px 20px 0 0; }

.taskbar { height: 48px; flex: none; display: flex; align-items: center; background: linear-gradient(90deg, #21182c 0, #211a3b 15%, #2c1a3c 30%, #381930 38%, #34201f 47%, #33221d 51%, #43162a 57%, #461520 61%, #4a1512 70%, #48170f 83%, #3b1816 90%, #2d1616 100%); color: #fff; }
.apps { display: flex; margin-left: 588px; gap: 4px; width: 744.500px; }
.app { width: 40px; height: 40px; flex: none; display: grid; place-items: center; border-radius: 4px; position: relative; box-sizing: border-box; }
.app.on { background: rgba(255, 255, 255, .08); box-shadow: inset 0 0 0 1px rgba(255, 255, 255, .06); }
.app.run::after, .app.on::after { content: ""; position: absolute; left: 17px; bottom: 1px; width: 6px; height: 3px; border-radius: 2px; background: #a09a9c; }
.app.on::after { left: 12px; width: 16px; background: #dd9be4; }
.cnt { position: absolute; right: 3px; top: 8px; height: 11px; padding: 0 2px; border-radius: 3px; background: #80787a; font-size: 8.500px; line-height: 11px; }
.tray { margin-left: 301px; display: flex; align-items: center; font-size: 11px; }
.tray svg { fill: none; stroke: #f2eef0; stroke-width: 1.200; }
.tray .mic { stroke: #d9a0e0; margin: 0 20px 0 14px; }
.lang { width: 23px; text-align: center; line-height: 16px; display: flex; flex-direction: column; align-items: center; }
.net { margin-left: 17px; }
.vol { margin: 0 7px 0 6px; }
.clock { width: 71px; display: flex; flex-direction: column; align-items: flex-end; line-height: 16px; padding-right: 10.500px; }
.ntf { width: 16px; height: 16px; border-radius: 50%; background: #d99be2; color: #222; text-align: center; font-size: 10px; line-height: 16px; font-weight: 400; }
</style>
